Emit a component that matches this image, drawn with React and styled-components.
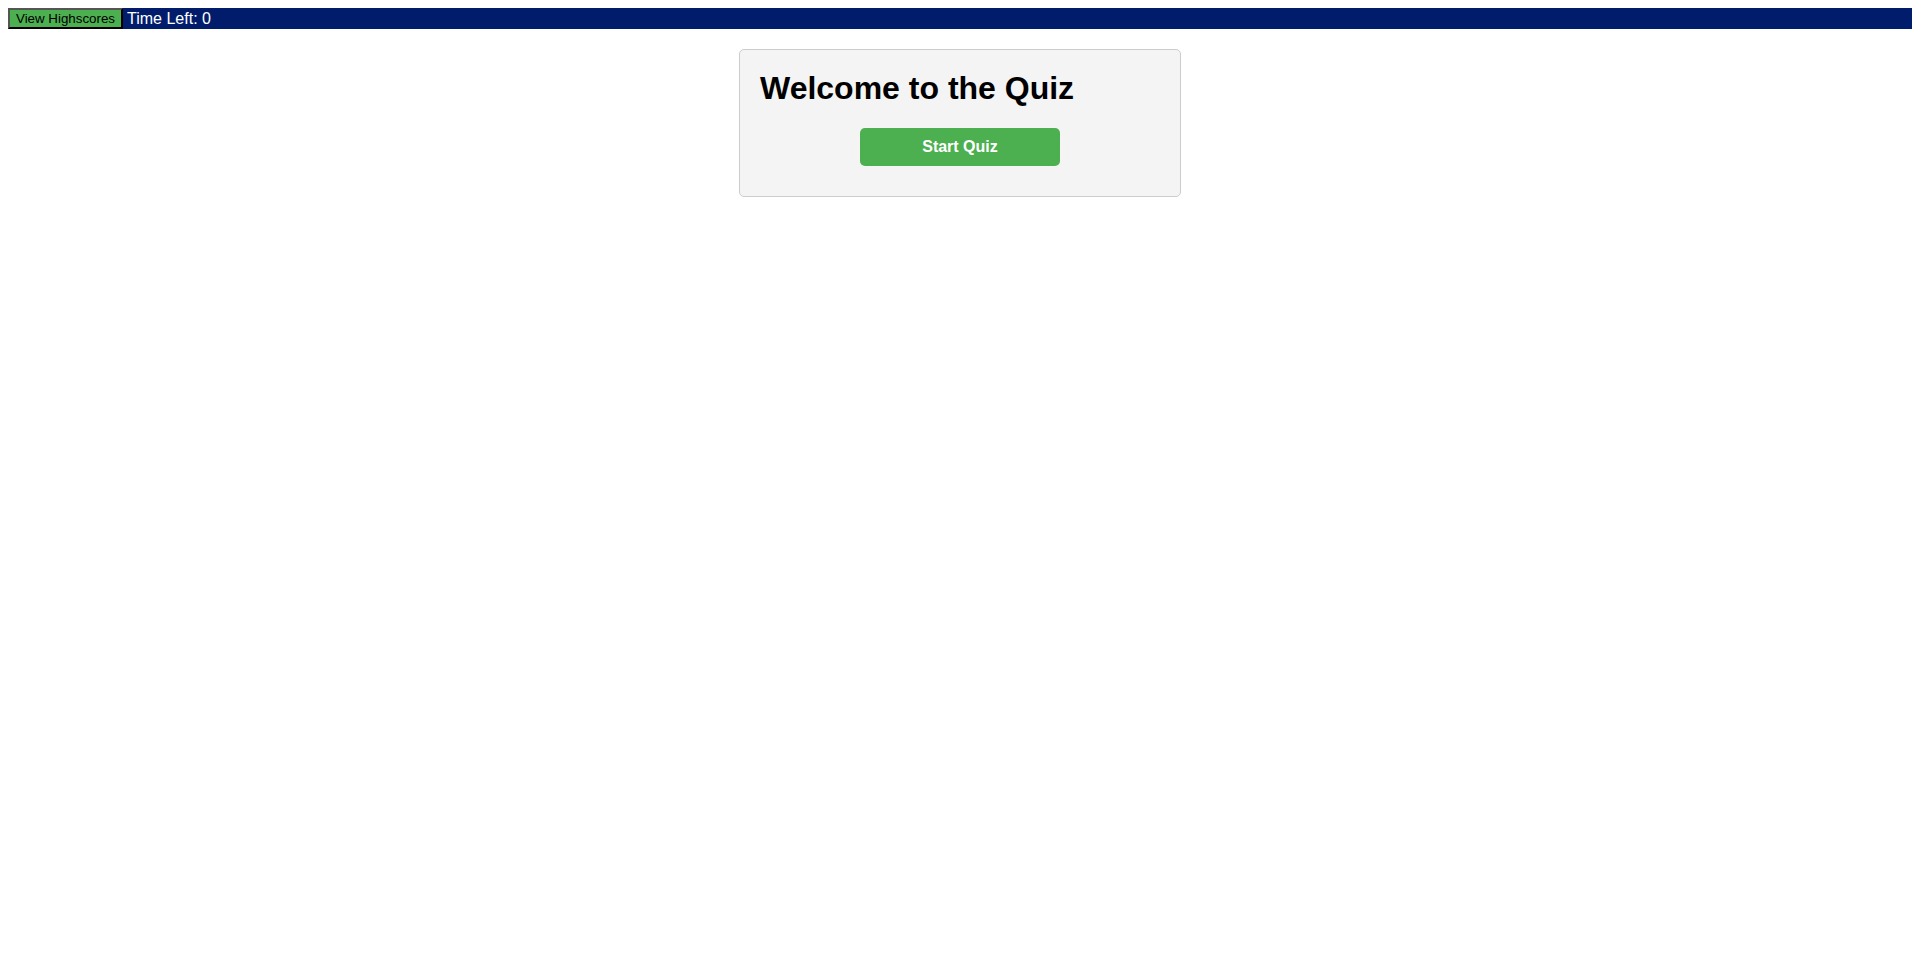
import React from "react";
import styled, { createGlobalStyle } from "styled-components";

const Global = createGlobalStyle`
  body {
    margin: 8px;
    font-family: "Liberation Sans", Arial, sans-serif;
    background: #fff;
  }
`;

const Header = styled.header`
  display: flex;
  align-items: center;
  gap: 4px;
  height: 21px;
  background: #001c6b;
  color: #fff;
`;

const HighscoreButton = styled.button`
  height: 21px;
  padding: 1px 6px;
  font-family: "Liberation Sans", Arial, sans-serif;
  font-size: 13.33px;
  color: #000;
  background: #4caf50;
  border: 2px outset #555;
  border-right-color: #111;
  border-bottom-color: #111;
  cursor: pointer;
`;

const Timer = styled.span`
  font-size: 16px;
  line-height: 18px;
`;

const Main = styled.main`
  display: flex;
  justify-content: center;
  padding-top: 20px;
`;

const Card = styled.section`
  width: 400px;
  padding: 20px;
  background: #f4f4f4;
  border: 1px solid #ccc;
  border-radius: 5px;
  display: flex;
  flex-direction: column;
  align-items: center;
`;

const Title = styled.h1`
  align-self: stretch;
  margin: 0 0 21px;
  font-size: 32px;
  font-weight: bold;
  color: #000;
`;

const StartButton = styled.button`
  width: 200px;
  height: 38px;
  margin-bottom: 10px;
  background: #4caf50;
  color: #fff;
  border: none;
  border-radius: 5px;
  font-family: "Liberation Sans", Arial, sans-serif;
  font-size: 16px;
  font-weight: bold;
  cursor: pointer;
`;

export default function App() {
  return (
    <>
      <Global />
      <Header>
        <HighscoreButton>View Highscores</HighscoreButton>
        <Timer>Time Left: 0</Timer>
      </Header>
      <Main>
        <Card>
          <Title>Welcome to the Quiz</Title>
          <StartButton>Start Quiz</StartButton>
        </Card>
      </Main>
    </>
  );
}
